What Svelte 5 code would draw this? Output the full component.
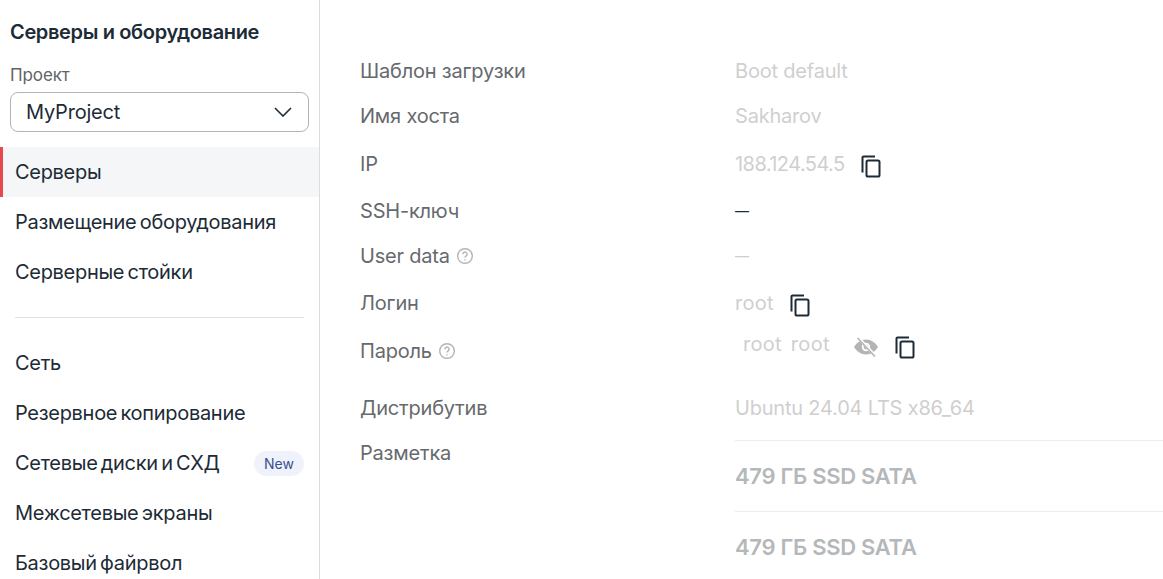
<script lang="ts">
	const topItems = ['Серверы', 'Размещение оборудования', 'Серверные стойки'];
	const bottomItems = [
		{ label: 'Сеть' },
		{ label: 'Резервное копирование' },
		{ label: 'Сетевые диски и СХД', badge: 'New' },
		{ label: 'Межсетевые экраны' },
		{ label: 'Базовый файрвол' }
	];
</script>

{#snippet copyIcon()}
	<svg class="copy" width="24" height="24" viewBox="0 0 24 24" fill="none" stroke="#1c2b36" stroke-width="2">
		<path d="M3.5 18.500V3.600a1.100 1.100 0 0 1 1.100-1.100H16" />
		<rect x="7.500" y="6.500" width="13" height="16" rx="1.600" />
	</svg>
{/snippet}

{#snippet helpIcon()}
	<svg class="help" width="18" height="18" viewBox="0 0 18 18" fill="none" stroke="#b4b4b4" stroke-width="1.400">
		<circle cx="9" cy="9" r="7.300" />
		<path d="M6.900 7.200a2.100 2.100 0 1 1 3.300 1.700c-.8.500-1.200.9-1.200 1.700" />
		<path d="M9 12.200v1.200" />
	</svg>
{/snippet}

<div class="page">
	<aside class="sidebar">
		<h2>Серверы и оборудование</h2>
		<div class="field-label">Проект</div>
		<div class="select">
			<span>MyProject</span>
			<svg width="18" height="10" viewBox="0 0 18 10" fill="none" stroke="#1c2b36" stroke-width="1.600">
				<path d="M1 1l8 8 8-8" />
			</svg>
		</div>
		<nav class="nav">
			{#each topItems as item, i}
				<div class="nav-item" class:active={i === 0}>{item}</div>
			{/each}
			<div class="divider"></div>
			{#each bottomItems as item}
				<div class="nav-item">
					{item.label}
					{#if item.badge}<span class="badge">{item.badge}</span>{/if}
				</div>
			{/each}
		</nav>
	</aside>

	<main class="main">
		<div class="row"><div class="label">Шаблон загрузки</div><div class="value">Boot default</div></div>
		<div class="row"><div class="label">Имя хоста</div><div class="value">Sakharov</div></div>
		<div class="row tall ip">
			<div class="label">IP</div>
			<div class="value"><span class="digits">188.124.54.5</span> {@render copyIcon()}</div>
		</div>
		<div class="row"><div class="label">SSH-ключ</div><div class="value dark"><span class="dash">—</span></div></div>
		<div class="row"><div class="label">User data {@render helpIcon()}</div><div class="value"><span class="dash">—</span></div></div>
		<div class="row tall login">
			<div class="label">Логин</div>
			<div class="value"><span class="wide">root</span> {@render copyIcon()}</div>
		</div>
		<div class="row tall password">
			<div class="label">Пароль {@render helpIcon()}</div>
			<div class="value">
				<span class="secret wide">root root</span>
				<svg class="eye" width="26" height="24" viewBox="0 0 26 24">
					<path fill="#b4b4b4" d="M13 4.500c-5.200 0-9.400 3.200-12 7.500 2.600 4.300 6.800 7.500 12 7.500s9.400-3.200 12-7.500c-2.600-4.300-6.800-7.500-12-7.500z" />
					<circle cx="13" cy="12" r="4.200" fill="#fff" />
					<circle cx="13" cy="12" r="2.400" fill="#b4b4b4" />
					<path d="M5.500 3l17 18" stroke="#fff" stroke-width="3" />
					<path d="M4.500 3l17.500 18.500" stroke="#b4b4b4" stroke-width="1.600" />
				</svg>
				{@render copyIcon()}
			</div>
		</div>
		<div class="row distro"><div class="label">Дистрибутив</div><div class="value">Ubuntu 24.04 LTS x86_64</div></div>
		<div class="row markup">
			<div class="label">Разметка</div>
			<div class="disks">
				<div class="disk">479 ГБ SSD SATA</div>
				<div class="disk">479 ГБ SSD SATA</div>
			</div>
		</div>
	</main>
</div>

<style>
	:global(body) {
		margin: 0;
		background: #fff;
	}
	.page {
		display: flex;
		height: 579px;
		overflow: hidden;
		font-family: Inter, 'Noto Sans', sans-serif;
		letter-spacing: -0.2px;
	}
	.sidebar {
		width: 320px;
		flex: none;
		box-sizing: border-box;
		border-right: 1px solid #dcdcdc;
		padding-top: 19px;
	}
	h2 {
		margin: 0 0 0 10px;
		font-size: 20px;
		line-height: 26px;
		font-weight: 600;
		color: #1c2b36;
		letter-spacing: -0.35px;
	}
	.field-label {
		margin: 20px 0 0 10px;
		font-size: 17px;
		line-height: 20px;
		color: #5f6468;
		letter-spacing: -0.1px;
	}
	.select {
		box-sizing: border-box;
		margin: 7px 10px 0;
		height: 40px;
		border: 1px solid #b4b4b4;
		border-radius: 8px;
		padding: 0 16px 0 15px;
		display: flex;
		align-items: center;
		justify-content: space-between;
		font-size: 20px;
		color: #1c2b36;
	}
	.nav {
		margin-top: 15px;
	}
	.nav-item {
		box-sizing: border-box;
		height: 50px;
		padding: 0 15px;
		display: flex;
		align-items: center;
		justify-content: space-between;
		font-size: 20px;
		color: #1c2b36;
		letter-spacing: -0.3px;
		word-spacing: -2px;
	}
	.nav-item.active {
		background: #f5f6f7;
		border-left: 3px solid #e5484d;
		padding-left: 12px;
	}
	.divider {
		height: 1px;
		margin: 20px 15px 20px;
		background: #e2e2e2;
	}
	.badge {
		width: 50px;
		height: 25px;
		border-radius: 13px;
		background: #f0f2fb;
		color: #3a4f8e;
		font-size: 14px;
		display: flex;
		align-items: center;
		justify-content: center;
		letter-spacing: 0;
	}
	.main {
		flex: 1;
		display: flex;
		flex-direction: column;
		padding: 58px 0 0 40px;
		font-size: 20px;
	}
	.row {
		display: flex;
		align-items: center;
		min-height: 25px;
		margin-bottom: 20px;
	}
	.tall {
		min-height: 28px;
	}
	.ip {
		margin-top: 2px;
	}
	.login {
		margin-top: 1px;
	}
	.label {
		width: 375px;
		flex: none;
		display: flex;
		align-items: center;
		gap: 6px;
		color: #666a6d;
	}
	.value {
		display: flex;
		align-items: center;
		gap: 14px;
		color: #cfcfcf;
	}
	.copy {
		margin-top: 3px;
	}
	.digits {
		letter-spacing: -0.55px;
	}
	.wide {
		letter-spacing: 0.3px;
	}
	.dash {
		font-size: 14px;
		letter-spacing: 0;
	}
	.dark {
		color: #1c2b36;
	}
	.password {
		margin-bottom: 30px;
	}
	.secret {
		margin-left: 8px;
		word-spacing: 3px;
		margin-right: 9px;
	}
	.password .value {
		margin-top: -14px;
	}
	.password .copy,
	.password .eye {
		margin-top: 6px;
	}
	.distro {
		margin-bottom: 21px;
	}
	.markup {
		align-items: flex-start;
		margin: 0;
	}
	.disks {
		flex: 1;
		margin-top: -1px;
	}
	.disk {
		box-sizing: border-box;
		border-top: 1px solid #ececec;
		height: 71px;
		display: flex;
		align-items: center;
		font-size: 22px;
		font-weight: 600;
		color: #b4b8ba;
		letter-spacing: -0.3px;
	}
</style>
